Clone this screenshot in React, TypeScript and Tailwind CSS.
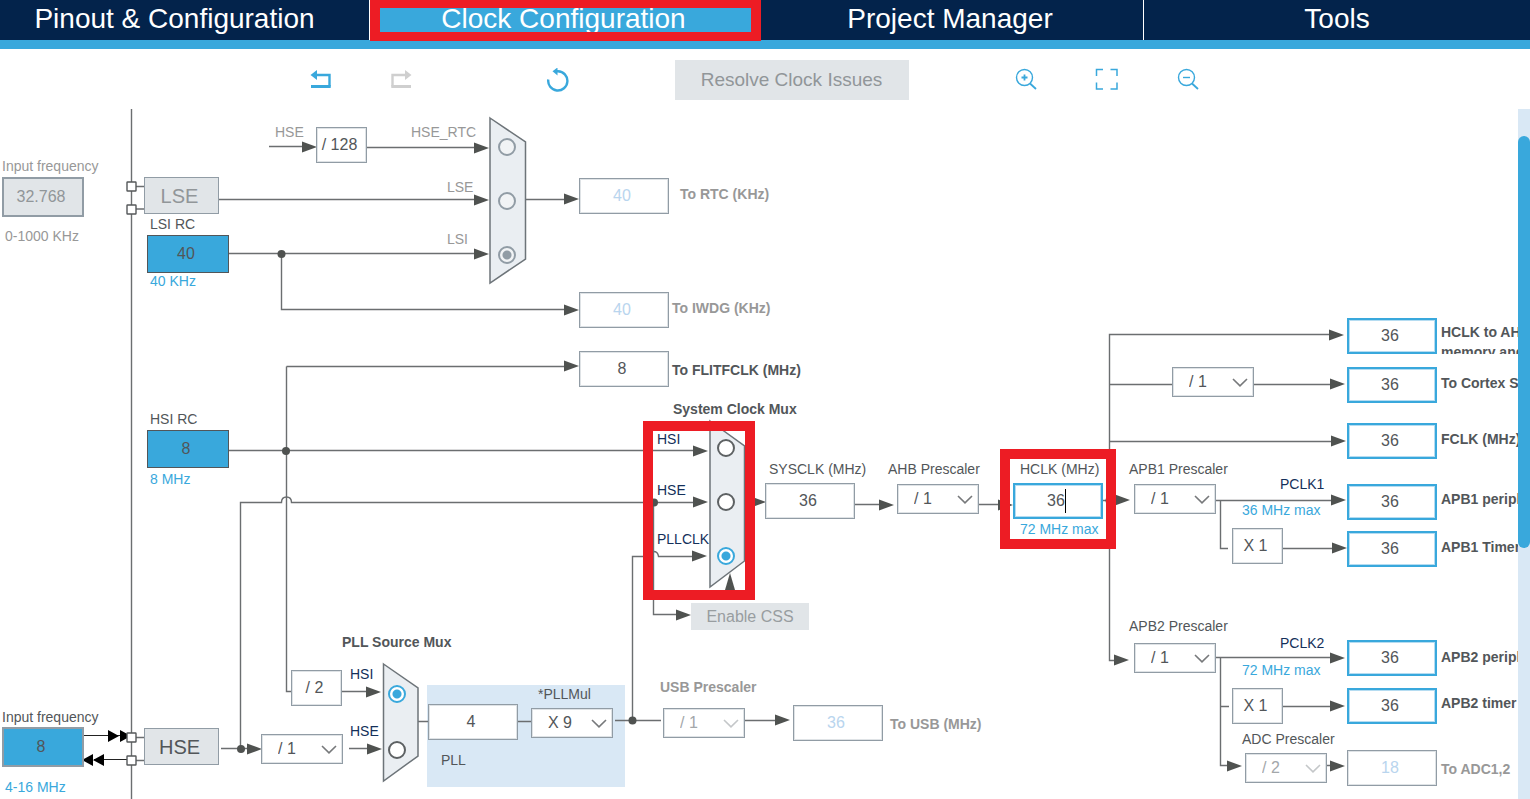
import React, { useState } from "react";
import { clsx } from "clsx";

type Tone = "dark" | "gray" | "blue" | "navy";

const toneClass: Record<Tone, string> = {
  dark: "text-[#525659]",
  gray: "text-[#989898]",
  blue: "text-[#39a8dc]",
  navy: "text-[#14305a]",
};

function Label({ at, tone = "dark", bold = false, htmlFor, children }: {
  at: string; tone?: Tone; bold?: boolean; htmlFor?: string; children: React.ReactNode;
}) {
  const cls = clsx("absolute whitespace-nowrap text-sm leading-4", at, toneClass[tone], bold && "font-bold");
  return htmlFor ? <label htmlFor={htmlFor} className={cls}>{children}</label> : <span className={cls}>{children}</span>;
}

type FieldKind = "plain" | "muted" | "active" | "source" | "external" | "disabled";

const fieldClass: Record<FieldKind, string> = {
  plain: "h-9 w-[90px] border border-[#919ca5] bg-white text-[#525659] shadow-[inset_0_0_0_1px_#dfe3e6]",
  muted: "h-9 w-[90px] border border-[#919ca5] bg-white text-[#b9d5ee] shadow-[inset_0_0_0_1px_#dfe3e6]",
  active: "h-9 w-[90px] border-2 border-[#39a8dc] bg-white text-[#525659] shadow-[inset_0_0_0_1px_#b5dcf1]",
  source: "h-[38px] w-[82px] border border-[#525659] bg-[#39a8dc] text-[#525659]",
  external: "h-10 w-[82px] border-2 border-[#919ca5] bg-[#39a8dc] text-[#525659]",
  disabled: "h-10 w-[82px] border-2 border-[#919ca5] bg-[#e1e5e8] text-[#919699]",
};

function Field({ at, id, name, value, kind = "plain" }: {
  at: string; id?: string; name?: string; value: string; kind?: FieldKind;
}) {
  const [v, setV] = useState(value);
  return (
    <input
      id={id}
      aria-label={name}
      value={v}
      onChange={(e) => setV(e.target.value)}
      disabled={kind === "disabled" || kind === "muted"}
      className={clsx("absolute pr-1 text-center text-base leading-5 outline-none", at, fieldClass[kind])}
    />
  );
}

function Prescaler({ at, id, name, value, options, disabled = false }: {
  at: string; id?: string; name?: string; value: string; options: string[]; disabled?: boolean;
}) {
  return (
    <div className={clsx("absolute h-[30px] w-[82px]", at, disabled ? "text-[#a3a7aa]" : "text-[#525659]")}>
      <select
        id={id}
        aria-label={name}
        defaultValue={value}
        disabled={disabled}
        className="h-full w-full appearance-none border border-[#919ca5] bg-white pl-4 text-base leading-5 opacity-100 shadow-[inset_0_0_0_1px_#dfe3e6] outline-none"
      >
        {options.map((o) => <option key={o}>{o}</option>)}
      </select>
      <svg className="pointer-events-none absolute top-[11px] right-[6px] h-[9px] w-4" viewBox="0 0 16 9" fill="none" stroke={disabled ? "#c4c7c9" : "#77797b"} strokeWidth="1.6">
        <path d="M1 1l7 6.8L15 1" />
      </svg>
    </div>
  );
}

function Fixed({ at, children }: { at: string; children: React.ReactNode }) {
  return (
    <div className={clsx("absolute flex h-9 w-[51px] items-center justify-center border border-[#919ca5] bg-white pr-1 text-base leading-5 text-[#525659] shadow-[inset_0_0_0_1px_#dfe3e6]", at)}>
      {children}
    </div>
  );
}

function Oscillator({ at, gray = false, children }: { at: string; gray?: boolean; children: React.ReactNode }) {
  return (
    <div className={clsx("absolute flex h-[37px] w-[75px] items-center justify-center border border-[#919ca5] bg-[#e1e5e8] pr-1 text-xl leading-6", at, gray ? "text-[#919699]" : "text-[#525659]")}>
      {children}
    </div>
  );
}

function MuxRadio({ at, group, name, checked = false, disabled = false }: {
  at: string; group: string; name: string; checked?: boolean; disabled?: boolean;
}) {
  return (
    <input
      type="radio"
      name={group}
      aria-label={name}
      defaultChecked={checked}
      disabled={disabled}
      className={clsx(
        "absolute size-[18px] appearance-none rounded-full border-2",
        at,
        disabled
          ? "border-[#919ca5] bg-[#f1f3f5] checked:bg-[radial-gradient(circle,#919ca5_0_4px,#f1f3f5_5px)]"
          : "border-[#5d6163] bg-white checked:border-[#39a8dc] checked:bg-[radial-gradient(circle,#39a8dc_0_4px,#ffffff_5px)]",
      )}
    />
  );
}

const wires = [
  "M131.5 109V799",
  "M136 186.5H144M136 209H144M136 737.5H144M136 760.5H144",
  "M269 146.5H304M367 147.5H476M219 199.5H476",
  "M229 253.5H476M281.5 253.5V309.5H566",
  "M525 199.5H566",
  "M229 450.5H695M286.5 366.5V691.5H291M286.5 366.5H566",
  "M240.5 748.5V502.5H281.5Q281.5 497 286.5 497T291.5 502.5H695",
  "M221 748.5H252M342 691.5H370M349 748.5H370",
  "M653.5 502.5V614.5H678",
  "M632.5 720.5V556.5H649Q649 551.5 653.5 551.5T658.5 556.5H694",
  "M745 502.5H754M855 504.5H880M979 504.5H1004M1102 500.5H1118",
  "M418 721.5H428M517 721.5H531M615 720.5H661M745 720.5H776",
  "M1116 660.5H1109.5V334.5H1330M1109.5 384.5H1172M1254 384.5H1330M1109.5 441.5H1332",
  "M1216 500.5H1332M1220.5 500.5V548.5H1228M1283 548.5H1332",
  "M1216 657.5H1331M1220.5 657.5V765.5H1228M1220.5 706.5H1229M1283 706.5H1331M1327 765.5H1332",
];

const arrowTips: [number, number][] = [
  [317, 147], [489, 148], [489, 200], [489, 254], [579, 199], [579, 310], [579, 366],
  [708, 451], [708, 502], [707, 556], [691, 615], [766, 502], [894, 505], [1013, 505],
  [1130, 500], [1344, 335], [1345, 384], [1346, 441], [1346, 500], [1347, 548],
  [1129, 660], [1345, 658], [1345, 706], [1242, 766], [1345, 766], [262, 749],
  [381, 692], [382, 749], [790, 720],
];

const junctions: [number, number][] = [
  [281.5, 254], [286, 451], [241, 749], [654, 502.5], [632.5, 720.5], [1109.5, 500.5],
];

const pads: [number, number][] = [[127, 182], [127, 205], [127, 733], [127, 756]];

function Wiring() {
  return (
    <svg className="absolute top-0 left-0" width="1518" height="690" viewBox="0 109 1518 690" fill="none" aria-hidden="true">
      <g stroke="#6b6e70" strokeWidth="1.4">
        {wires.map((d) => <path key={d} d={d} />)}
      </g>
      <g fill="#4f5250">
        {arrowTips.map(([x, y]) => <path key={`${x}-${y}`} d={`M${x} ${y}l-15 -5.5v11z`} />)}
        {junctions.map(([x, y]) => <circle key={`${x}-${y}`} cx={x} cy={y} r="4" />)}
      </g>
      <g fill="#000" stroke="#222" strokeWidth="1.2">
        <path d="M84 735.5H120M94 759.5H127" />
        <path stroke="none" d="M119 736l-11 -6v12zM131 736l-11 -6v12zM82 760l11 -6v12zM93 760l11 -6v12z" />
      </g>
      <g fill="#fff" stroke="#55585a" strokeWidth="1.4">
        {pads.map(([x, y]) => <rect key={y} x={x} y={y} width="9" height="9" rx="0.5" />)}
      </g>
      <g fill="#eaeef2" stroke="#6d7479" strokeWidth="1.5">
        <path d="M490 118L525.5 142V259L490 283Z" />
        <path d="M710 421L744.5 446V561L710 587Z" />
        <path d="M383.5 664L418 688V756L383.5 781Z" />
      </g>
      <path d="M730 573l5 17h-10z" fill="#4f5250" />
    </svg>
  );
}

const divs = ["/ 1", "/ 2", "/ 4", "/ 8", "/ 16"];

function ClockTree() {
  return (
    <section aria-label="Clock tree" className="relative min-w-0 flex-1 overflow-hidden">
      <div className="absolute top-[576px] left-[427px] h-[102px] w-[198px] bg-[#d9e8f5]" />
      <Wiring />

      <Label at="left-[2px] top-[49px]" tone="gray" htmlFor="lse-in">Input frequency</Label>
      <Field at="left-[2px] top-[68px]" id="lse-in" value="32.768" kind="disabled" />
      <Label at="left-[5px] top-[119px]" tone="gray">0-1000 KHz</Label>
      <Oscillator at="left-[144px] top-[68px]" gray>LSE</Oscillator>
      <Label at="left-[150px] top-[107px]" htmlFor="lsi">LSI RC</Label>
      <Field at="left-[147px] top-[126px]" id="lsi" value="40" kind="source" />
      <Label at="left-[150px] top-[164px]" tone="blue">40 KHz</Label>

      <Label at="left-[275px] top-[15px]" tone="gray">HSE</Label>
      <Fixed at="left-[316px] top-[18px]">/ 128</Fixed>
      <Label at="left-[411px] top-[15px]" tone="gray">HSE_RTC</Label>
      <Label at="left-[447px] top-[70px]" tone="gray">LSE</Label>
      <Label at="left-[447px] top-[122px]" tone="gray">LSI</Label>
      <MuxRadio at="left-[498px] top-[29px]" group="rtc" name="RTC source HSE_RTC" disabled />
      <MuxRadio at="left-[498px] top-[83px]" group="rtc" name="RTC source LSE" disabled />
      <MuxRadio at="left-[498px] top-[137px]" group="rtc" name="RTC source LSI" checked disabled />
      <Field at="left-[579px] top-[69px]" id="rtc" value="40" kind="muted" />
      <Label at="left-[680px] top-[77px]" tone="gray" bold htmlFor="rtc">To RTC (KHz)</Label>
      <Field at="left-[579px] top-[183px]" id="iwdg" value="40" kind="muted" />
      <Label at="left-[672px] top-[191px]" tone="gray" bold htmlFor="iwdg">To IWDG (KHz)</Label>
      <Field at="left-[579px] top-[242px]" id="flit" value="8" />
      <Label at="left-[672px] top-[253px]" bold htmlFor="flit">To FLITFCLK (MHz)</Label>

      <Label at="left-[150px] top-[302px]" htmlFor="hsi">HSI RC</Label>
      <Field at="left-[147px] top-[321px]" id="hsi" value="8" kind="source" />
      <Label at="left-[150px] top-[362px]" tone="blue">8 MHz</Label>

      <Label at="left-[673px] top-[292px]" bold>System Clock Mux</Label>
      <Label at="left-[657px] top-[322px]" tone="navy">HSI</Label>
      <Label at="left-[657px] top-[373px]" tone="navy">HSE</Label>
      <Label at="left-[657px] top-[422px]" tone="navy">PLLCLK</Label>
      <MuxRadio at="left-[717px] top-[330px]" group="sys" name="System clock HSI" />
      <MuxRadio at="left-[717px] top-[384px]" group="sys" name="System clock HSE" />
      <MuxRadio at="left-[717px] top-[438px]" group="sys" name="System clock PLLCLK" checked />
      <button type="button" disabled className="absolute top-[494px] left-[691px] h-[27px] w-[118px] bg-[#e1e5e8] text-base leading-5 text-[#989da0]">
        Enable CSS
      </button>

      <Label at="left-[769px] top-[352px]" htmlFor="sysclk">SYSCLK (MHz)</Label>
      <Field at="left-[765px] top-[374px]" id="sysclk" value="36" />
      <Label at="left-[888px] top-[352px]" htmlFor="ahb">AHB Prescaler</Label>
      <Prescaler at="left-[897px] top-[375px]" id="ahb" value="/ 1" options={divs} />
      <Label at="left-[1020px] top-[352px]" htmlFor="hclk">HCLK (MHz)</Label>
      <Field at="left-[1013px] top-[374px]" id="hclk" value="36" kind="active" />
      <span className="absolute top-[380px] left-[1065px] h-6 w-px bg-black" />
      <Label at="left-[1020px] top-[412px]" tone="blue">72 MHz max</Label>

      <Prescaler at="left-[1172px] top-[258px]" name="Cortex prescaler" value="/ 1" options={["/ 1", "/ 8"]} />
      <Field at="left-[1347px] top-[209px]" id="ahbbus" value="36" kind="active" />
      <label htmlFor="ahbbus" className="absolute top-[213px] left-[1441px] h-8 overflow-hidden text-sm leading-5 font-bold whitespace-nowrap text-[#525659]">
        HCLK to AHB bus, core,<br />memory and DMA (MHz)
      </label>
      <Field at="left-[1347px] top-[258px]" id="cortex" value="36" kind="active" />
      <Label at="left-[1441px] top-[266px]" bold htmlFor="cortex">To Cortex System timer (MHz)</Label>
      <Field at="left-[1347px] top-[314px]" id="fclk" value="36" kind="active" />
      <Label at="left-[1441px] top-[322px]" bold htmlFor="fclk">FCLK (MHz)</Label>

      <Label at="left-[1129px] top-[352px]" htmlFor="apb1">APB1 Prescaler</Label>
      <Prescaler at="left-[1134px] top-[375px]" id="apb1" value="/ 1" options={divs} />
      <Label at="left-[1280px] top-[367px]" tone="navy">PCLK1</Label>
      <Label at="left-[1242px] top-[393px]" tone="blue">36 MHz max</Label>
      <Field at="left-[1347px] top-[375px]" id="apb1p" value="36" kind="active" />
      <Label at="left-[1441px] top-[382px]" bold htmlFor="apb1p">APB1 peripheral clocks (MHz)</Label>
      <Fixed at="left-[1232px] top-[419px]">X 1</Fixed>
      <Field at="left-[1347px] top-[422px]" id="apb1t" value="36" kind="active" />
      <Label at="left-[1441px] top-[430px]" bold htmlFor="apb1t">APB1 Timer clocks (MHz)</Label>

      <Label at="left-[1129px] top-[509px]" htmlFor="apb2">APB2 Prescaler</Label>
      <Prescaler at="left-[1134px] top-[534px]" id="apb2" value="/ 1" options={divs} />
      <Label at="left-[1280px] top-[526px]" tone="navy">PCLK2</Label>
      <Label at="left-[1242px] top-[553px]" tone="blue">72 MHz max</Label>
      <Field at="left-[1347px] top-[531px]" id="apb2p" value="36" kind="active" />
      <Label at="left-[1441px] top-[540px]" bold htmlFor="apb2p">APB2 peripheral clocks (MHz)</Label>
      <Fixed at="left-[1232px] top-[579px]">X 1</Fixed>
      <Field at="left-[1347px] top-[579px]" id="apb2t" value="36" kind="active" />
      <Label at="left-[1441px] top-[586px]" bold htmlFor="apb2t">APB2 timer clocks (MHz)</Label>
      <Label at="left-[1242px] top-[622px]" htmlFor="adcp">ADC Prescaler</Label>
      <Prescaler at="left-[1245px] top-[644px]" id="adcp" value="/ 2" options={["/ 2", "/ 4", "/ 6", "/ 8"]} disabled />
      <Field at="left-[1347px] top-[641px]" id="adc" value="18" kind="muted" />
      <Label at="left-[1441px] top-[652px]" tone="gray" bold htmlFor="adc">To ADC1,2</Label>

      <Label at="left-[2px] top-[600px]" htmlFor="hse-in">Input frequency</Label>
      <Field at="left-[2px] top-[618px]" id="hse-in" value="8" kind="external" />
      <Label at="left-[5px] top-[670px]" tone="blue">4-16 MHz</Label>
      <Oscillator at="left-[144px] top-[619px]">HSE</Oscillator>
      <Prescaler at="left-[261px] top-[625px]" name="HSE divider" value="/ 1" options={["/ 1", "/ 2"]} />
      <Fixed at="left-[291px] top-[561px]">/ 2</Fixed>
      <Label at="left-[342px] top-[525px]" bold>PLL Source Mux</Label>
      <Label at="left-[350px] top-[557px]" tone="navy">HSI</Label>
      <Label at="left-[350px] top-[614px]" tone="navy">HSE</Label>
      <MuxRadio at="left-[388px] top-[576px]" group="pll" name="PLL source HSI" checked />
      <MuxRadio at="left-[388px] top-[632px]" group="pll" name="PLL source HSE" />
      <Field at="left-[428px] top-[595px]" name="PLL input" value="4" />
      <Label at="left-[538px] top-[577px]" htmlFor="pllmul">*PLLMul</Label>
      <Prescaler at="left-[531px] top-[599px]" id="pllmul" value="X 9" options={["X 2", "X 3", "X 4", "X 6", "X 8", "X 9", "X 16"]} />
      <Label at="left-[441px] top-[643px]">PLL</Label>
      <Label at="left-[660px] top-[570px]" tone="gray" bold htmlFor="usbp">USB Prescaler</Label>
      <Prescaler at="left-[663px] top-[599px]" id="usbp" value="/ 1" options={["/ 1", "/ 1.5"]} disabled />
      <Field at="left-[793px] top-[596px]" id="usb" value="36" kind="muted" />
      <Label at="left-[890px] top-[607px]" tone="gray" bold htmlFor="usb">To USB (MHz)</Label>

      <div className="pointer-events-none absolute top-[312px] left-[643px] h-[179px] w-[112px] border-10 border-[#ed1c24]" />
      <div className="pointer-events-none absolute top-[340px] left-[1000px] h-[100px] w-[116px] border-10 border-[#ed1c24]" />
    </section>
  );
}

function IconButton({ name, disabled = false, children }: { name: string; disabled?: boolean; children: React.ReactNode }) {
  return (
    <button type="button" aria-label={name} disabled={disabled} className={clsx("size-6 shrink-0", disabled ? "text-[#cfcfcf]" : "text-[#39a8dc]")}>
      <svg viewBox="0 0 24 24" className="size-6" fill="none" stroke="currentColor">{children}</svg>
    </button>
  );
}

function Toolbar() {
  return (
    <div className="flex h-[60px] shrink-0 items-center justify-center pt-[2px] pr-[22px]">
      <div className="flex gap-14">
        <IconButton name="Undo">
          <path d="M6 7H20.500V18.500" strokeWidth="2.400" />
          <path d="M2 18.500H21.700" strokeWidth="3" />
          <path d="M1.500 7L8 2V12Z" fill="currentColor" stroke="none" />
        </IconButton>
        <IconButton name="Redo" disabled>
          <path d="M17 7H3.500V18.500" strokeWidth="2.400" />
          <path d="M2.300 18.500H22" strokeWidth="3" />
          <path d="M22.500 7L16 2V12Z" fill="currentColor" stroke="none" />
        </IconButton>
      </div>
      <div className="ml-[133px] flex">
        <IconButton name="Reset">
          <path d="M2.300 11.500A9.600 9.600 0 1 0 12 3.300H9" strokeWidth="2.400" />
          <path d="M6.500 3.300L11.500 -0.500V7.500Z" fill="currentColor" stroke="none" />
        </IconButton>
      </div>
      <button type="button" disabled className="mx-[105px] h-10 w-[234px] shrink-0 bg-[#e1e5e8] text-[19px] leading-6 text-[#919699]">
        Resolve Clock Issues
      </button>
      <div className="flex gap-[57px]">
        <IconButton name="Zoom in">
          <g strokeWidth="1.400">
            <circle cx="10.500" cy="9.500" r="8" />
            <path d="M16 15.500L22 21" strokeWidth="1.800" />
            <path d="M7.500 9.500H13.500M10.500 6.500V12.500" strokeWidth="1.800" />
          </g>
        </IconButton>
        <IconButton name="Fit to window">
          <path d="M1.500 8V1.500H8M15.500 1.500H22V8M22 14.500V21H15.500M8 21H1.500V14.500" strokeWidth="1.500" />
        </IconButton>
        <IconButton name="Zoom out">
          <g strokeWidth="1.400">
            <circle cx="10.500" cy="9.500" r="8" />
            <path d="M16 15.500L22 21" strokeWidth="1.800" />
            <path d="M7 9.500H14" />
          </g>
        </IconButton>
      </div>
    </div>
  );
}

export default function App() {
  const tab = "flex items-start justify-center pt-[3px] text-[28px] leading-8 whitespace-nowrap text-white";
  return (
    <div className="flex min-h-screen flex-col overflow-hidden bg-white font-['Liberation_Sans',Arial,sans-serif]">
      <nav className="grid h-[49px] shrink-0 grid-cols-[370fr_387fr_387fr_386fr] border-b-[9px] border-[#39a8dc] bg-[#03234b]">
        <button type="button" className={clsx(tab, "border-r border-white pr-5")}>Pinout &amp; Configuration</button>
        <div className="relative grid bg-[#39a8dc]">
          <button type="button" aria-current="page" className={tab}>Clock Configuration</button>
          <div className="pointer-events-none absolute top-0 -right-1 left-0 h-[41px] border-x-10 border-t-8 border-b-[9px] border-[#ed1c24]" />
        </div>
        <button type="button" className={clsx(tab, "border-r border-white")}>Project Manager</button>
        <button type="button" className={tab}>Tools</button>
      </nav>
      <Toolbar />
      <main className="flex min-h-[690px] flex-1">
        <ClockTree />
        <div className="flex w-3 shrink-0 flex-col bg-[#d9e8f5] pt-[27px]">
          <div className="grow-41 rounded-full bg-[#39a8dc]" />
          <div className="grow-25" />
        </div>
      </main>
    </div>
  );
}
